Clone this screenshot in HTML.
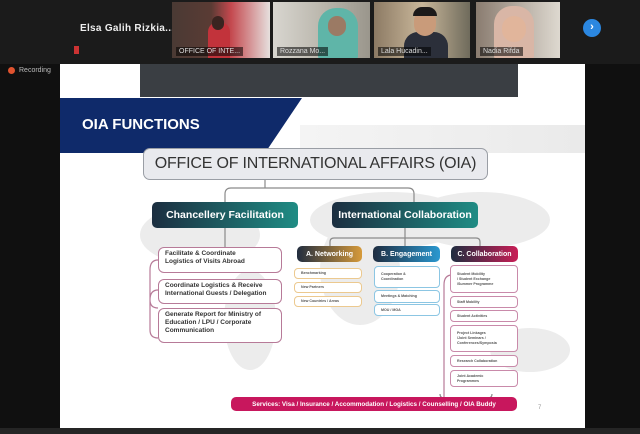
<!DOCTYPE html>
<html><head><meta charset="utf-8"><style>
*{margin:0;padding:0;box-sizing:border-box}
html,body{width:640px;height:434px;overflow:hidden}
body{background:#101010;position:relative;font-family:"Liberation Sans",sans-serif}
.a{position:absolute}
.th{position:absolute;top:2px;height:56px;overflow:hidden}
.lbl{position:absolute;left:4px;bottom:2px;font-size:7px;color:#ddd;background:rgba(0,0,0,.55);padding:1px 3px;white-space:nowrap}
.bx{position:absolute;border:1.5px solid #b77a98;border-radius:6px;background:#fff;font-size:6.5px;font-weight:bold;color:#333;padding:2px 6px;line-height:8px;white-space:nowrap}
.sm{position:absolute;border-radius:4px;background:#fff;font-size:3.6px;font-weight:bold;color:#555;padding:1px 6px;line-height:5px;display:flex;align-items:center}
.hd{position:absolute;border-radius:5px;color:#fff;font-weight:bold;display:flex;align-items:center;justify-content:center;white-space:nowrap}
</style></head><body>
<div class="a" style="left:0;top:0;width:640px;height:64px;background:#1b1b1b"></div>
<div class="a" style="left:80px;top:23px;color:#eee;font-size:10px;font-weight:bold;letter-spacing:.3px">Elsa Galih Rizkia...</div>
<div class="a" style="left:74px;top:46px;width:5px;height:8px;background:#c33"></div>
<div class="th" style="left:172px;width:98px;background:linear-gradient(90deg,#4a3a34 0,#5a3b34 40%,#c4484e 60%,#e6e0de 100%)">
 <div class="a" style="left:36px;top:20px;width:22px;height:36px;border-radius:10px 10px 0 0;background:#c2333b"></div>
 <div class="a" style="left:40px;top:14px;width:12px;height:14px;border-radius:6px;background:#3a2420"></div>
 <div class="lbl">OFFICE OF INTE...</div></div>
<div class="th" style="left:273px;width:97px;background:linear-gradient(90deg,#d8d6d0,#bbb7ad 50%,#9a968c)">
 <div class="a" style="left:45px;top:6px;width:40px;height:52px;border-radius:18px 18px 4px 4px;background:#5fb5a8"></div>
 <div class="a" style="left:55px;top:14px;width:18px;height:20px;border-radius:9px;background:#9b7a64"></div>
 <div class="lbl">Rozzana Mo...</div></div>
<div class="th" style="left:374px;width:96px;background:linear-gradient(90deg,#8c7a64,#c9b79a 50%,#6f6b5c)">
 <div class="a" style="left:30px;top:30px;width:44px;height:30px;border-radius:14px 14px 0 0;background:#2b2f3a"></div>
 <div class="a" style="left:40px;top:8px;width:22px;height:26px;border-radius:11px;background:#c99b7a"></div>
 <div class="a" style="left:39px;top:5px;width:24px;height:9px;border-radius:10px 10px 0 0;background:#1c1a1a"></div>
 <div class="lbl">Lala Hucadin...</div></div>
<div class="th" style="left:476px;width:84px;background:linear-gradient(90deg,#8a7c70,#ded9d0)">
 <div class="a" style="left:18px;top:4px;width:40px;height:54px;border-radius:18px 18px 4px 4px;background:#d9b6a6"></div>
 <div class="a" style="left:26px;top:14px;width:24px;height:26px;border-radius:12px;background:#e1b59b"></div>
 <div class="lbl">Nadia Rifda</div></div>
<div class="a" style="left:583px;top:19px;width:18px;height:18px;border-radius:50%;background:#2b87e0;color:#fff;font-size:11px;font-weight:bold;text-align:center;line-height:17px">›</div>
<div class="a" style="left:8px;top:67px;width:7px;height:7px;border-radius:50%;background:#e0532f"></div>
<div class="a" style="left:19px;top:67px;color:#bbb;font-size:7px">Recording</div>
<!-- slide -->
<div class="a" style="left:60px;top:64px;width:525px;height:364px;background:#fff;overflow:hidden">
<svg class="a" style="left:0;top:116px" width="525" height="220">
<g fill="#ececec"><ellipse cx="140" cy="55" rx="60" ry="30"/><ellipse cx="190" cy="140" rx="26" ry="50"/><ellipse cx="300" cy="90" rx="40" ry="55"/><ellipse cx="330" cy="40" rx="80" ry="28"/><ellipse cx="420" cy="40" rx="70" ry="28"/><ellipse cx="470" cy="170" rx="40" ry="22"/></g></svg>
</div>
<div class="a" style="left:140px;top:64px;width:378px;height:33px;background:#3a3e43"></div>
<div class="a" style="left:300px;top:125px;width:285px;height:28px;background:linear-gradient(90deg,#f4f4f4,#eaeaea)"></div>
<svg class="a" style="left:60px;top:98px" width="245" height="55"><polygon points="0,0 242,0 205,55 0,55" fill="#0f2a6a"/></svg>
<div class="a" style="left:82px;top:116px;color:#fff;font-size:15px;font-weight:bold">OIA FUNCTIONS</div>
<div class="a" style="left:143px;top:148px;width:345px;height:32px;border:1.5px solid #9a9ea5;border-radius:7px;background:#e9eaee;font-size:16px;color:#333;text-align:center;line-height:29px;white-space:nowrap;letter-spacing:-0.2px">OFFICE OF INTERNATIONAL AFFAIRS (OIA)</div>
<svg class="a" style="left:140px;top:180px" width="400" height="230" fill="none" stroke="#8a8a8a" stroke-width="1.2">
<path d="M125 0V8M85 22V14q0-6 6-6h177q6 0 6 6v8"/>
<path d="M85 48V68M265 48v10M190 66v-4q0-4 4-4h142q4 0 4 4v4M265 58v8"/>
<g stroke="#b77a98"><path d="M18 80q-8 0-8 10v30q0 8 8 8M18 110q-8 0-8 10v30q0 8 8 8"/><path d="M312 95q-8 0-8 10v200q0 8 8 8"/></g>
<path d="M300 214q0 4 4 4h20l2 3l2-3h20q4 0 4-4" stroke="#888"/>
</svg>
<div class="hd" style="left:152px;top:202px;width:146px;height:26px;background:linear-gradient(90deg,#1c2e40,#1f8c84);font-size:10.5px">Chancellery Facilitation</div>
<div class="hd" style="left:332px;top:202px;width:146px;height:26px;background:linear-gradient(90deg,#1c2e40,#1f8c84);font-size:10.5px">International Collaboration</div>
<div class="bx" style="left:158px;top:247px;width:124px;height:26px">Facilitate &amp; Coordinate<br>Logistics of Visits Abroad</div>
<div class="bx" style="left:158px;top:279px;width:124px;height:25px">Coordinate Logistics &amp; Receive<br>International Guests / Delegation</div>
<div class="bx" style="left:158px;top:308px;width:124px;height:35px">Generate Report for Ministry of<br>Education / LPU / Corporate<br>Communication</div>
<div class="hd" style="left:297px;top:246px;width:65px;height:16px;background:linear-gradient(90deg,#222d3f,#d69a3a);font-size:7px">A. Networking</div>
<div class="hd" style="left:373px;top:246px;width:67px;height:16px;background:linear-gradient(90deg,#1f2d40,#2a98d0);font-size:7px">B. Engagement</div>
<div class="hd" style="left:451px;top:246px;width:67px;height:16px;background:linear-gradient(90deg,#1f2d40,#c91e56);font-size:7px">C. Collaboration</div>
<div class="sm" style="left:294px;top:268px;width:68px;height:11px;border:1px solid #ecc98f">Benchmarking</div>
<div class="sm" style="left:294px;top:282px;width:68px;height:11px;border:1px solid #ecc98f">New Partners</div>
<div class="sm" style="left:294px;top:296px;width:68px;height:11px;border:1px solid #ecc98f">New Countries / Areas</div>
<div class="sm" style="left:374px;top:266px;width:66px;height:22px;border:1px solid #8cc6e3">Cooperation &amp;<br>Coordination</div>
<div class="sm" style="left:374px;top:290px;width:66px;height:13px;border:1px solid #8cc6e3">Meetings &amp; Matching</div>
<div class="sm" style="left:374px;top:304px;width:66px;height:12px;border:1px solid #8cc6e3">MOU / MOA</div>
<div class="sm" style="left:450px;top:265px;width:68px;height:28px;border:1px solid #c98aaa">Student Mobility<br>/ Student Exchange<br>/Summer Programme</div>
<div class="sm" style="left:450px;top:296px;width:68px;height:12px;border:1px solid #c98aaa">Staff Mobility</div>
<div class="sm" style="left:450px;top:310px;width:68px;height:12px;border:1px solid #c98aaa">Student Activities</div>
<div class="sm" style="left:450px;top:325px;width:68px;height:27px;border:1px solid #c98aaa">Project Linkages<br>/Joint Seminars /<br>Conferences/Symposia</div>
<div class="sm" style="left:450px;top:355px;width:68px;height:12px;border:1px solid #c98aaa">Research Collaboration</div>
<div class="sm" style="left:450px;top:370px;width:68px;height:17px;border:1px solid #c98aaa">Joint Academic<br>Programmes</div>
<div class="hd" style="left:231px;top:397px;width:286px;height:14px;background:#c8175d;font-size:6.3px;border-radius:5px">Services: Visa / Insurance / Accommodation / Logistics / Counselling / OIA Buddy</div>
<div class="a" style="left:538px;top:405px;color:#999;font-size:6px">7</div>
<div class="a" style="left:0;top:428px;width:640px;height:6px;background:#252525"></div>
</body></html>
